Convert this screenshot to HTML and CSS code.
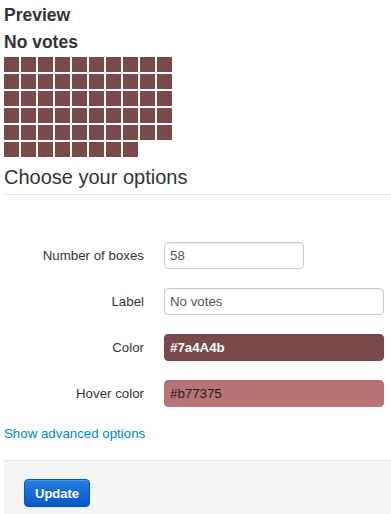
FILE: index.html
```html
<!DOCTYPE html>
<html>
<head>
<meta charset="utf-8">
<link rel="stylesheet" href="styles.css">
</head>
<body>
<div class="page">
  <h3 class="title">Preview</h3>
  <h3 class="title">No votes</h3>
  <div class="boxes" id="boxes"></div>
  <div class="legend">Choose your options</div>
  <form class="form">
    <div class="row">
      <label class="lbl">Number of boxes</label>
      <input class="inp inp-small" type="text" value="58">
    </div>
    <div class="row">
      <label class="lbl">Label</label>
      <input class="inp" type="text" value="No votes">
    </div>
    <div class="row">
      <label class="lbl">Color</label>
      <input class="inp inp-color" type="text" value="#7a4A4b">
    </div>
    <div class="row">
      <label class="lbl">Hover color</label>
      <input class="inp inp-hover" type="text" value="#b77375">
    </div>
  </form>
  <a class="adv" href="#">Show advanced options</a>
  <div class="actions">
    <button class="btn" type="button">Update</button>
  </div>
</div>
<script>
  var b = document.getElementById('boxes');
  for (var i = 0; i < 58; i++) {
    var d = document.createElement('div');
    d.className = 'box';
    b.appendChild(d);
  }
</script>
</body>
</html>
```

FILE: styles.css
```css
html, body {
  margin: 0;
  padding: 0;
  background: #fff;
}
body {
  font-family: "Liberation Sans", Arial, sans-serif;
  color: #333;
  font-size: 13px;
}
.page {
  padding-left: 4px;
  overflow: hidden;
}
.title {
  margin: 0;
  font-size: 17.5px;
  font-weight: bold;
  line-height: 27px;
  color: #333;
}
.title:first-child {
  margin-top: 2px;
}
.boxes {
  margin-top: 1px;
  display: grid;
  grid-template-columns: repeat(10, 15px);
  grid-auto-rows: 15px;
  gap: 2px;
}
.box {
  background: #7a4a4b;
}
.legend {
  margin-top: 5px;
  font-size: 20px;
  line-height: 30px;
  padding-bottom: 2px;
  border-bottom: 1px solid #e5e5e5;
  color: #333;
}
.form {
  margin: 47px 0 0 0;
  display: flex;
  flex-direction: column;
  gap: 19px;
}
.row {
  display: grid;
  grid-template-columns: 140px auto;
  column-gap: 20px;
  align-items: center;
}
.lbl {
  text-align: right;
  font-size: 13.3px;
  color: #333;
}
.inp {
  box-sizing: border-box;
  width: 220px;
  height: 27px;
  margin: 0;
  padding: 0 5px;
  border: 1px solid #ccc;
  border-radius: 4px;
  font-family: "Liberation Sans", Arial, sans-serif;
  font-size: 13.3px;
  color: #555;
  background: #fff;
  box-shadow: inset 0 1px 1px rgba(0,0,0,0.075);
  outline: none;
}
.inp-small {
  width: 140px;
}
.inp-color {
  background: #7a4a4b;
  border-color: #7a4a4b;
  color: #fff;
  font-weight: bold;
}
.inp-hover {
  background: #b77375;
  border-color: #b77375;
  color: #222;
}
.adv {
  display: block;
  margin-top: 17.5px;
  line-height: 18px;
  font-size: 13.3px;
  color: #0088cc;
  text-decoration: none;
}
.actions {
  margin-top: 17.5px;
  border-top: 1px solid #e5e5e5;
  background: #f5f5f5;
  padding: 18px 20px 20px;
}
.btn {
  display: block;
  box-sizing: border-box;
  height: 28px;
  padding: 0 10px;
  border: 1px solid #0a54b8;
  border-radius: 4px;
  background: linear-gradient(#2580e3, #0857c8);
  color: #fff;
  font-family: "Liberation Sans", Arial, sans-serif;
  font-size: 13px;
  font-weight: bold;
  text-shadow: 0 -1px 0 rgba(0,0,0,0.25);
  box-shadow: inset 0 1px 0 rgba(255,255,255,0.2), 0 1px 2px rgba(0,0,0,0.05);
}
```
